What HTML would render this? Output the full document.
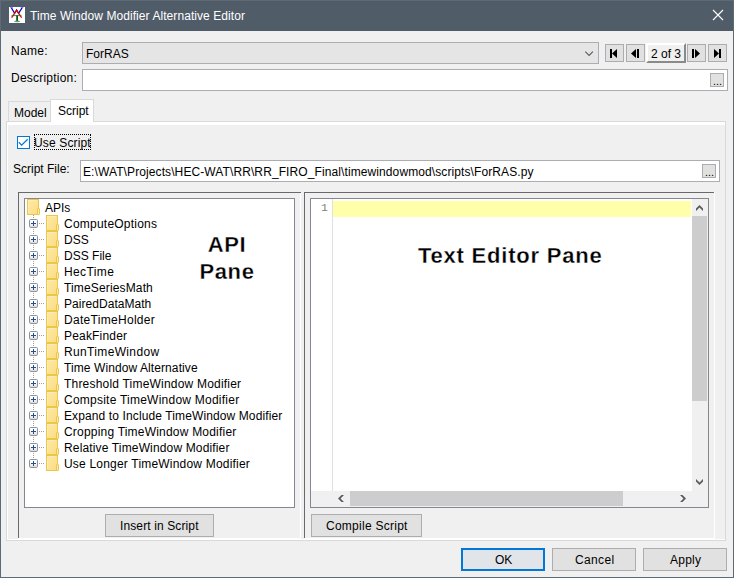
<!DOCTYPE html>
<html><head><meta charset="utf-8">
<style>
html,body{margin:0;padding:0;}
body{width:734px;height:578px;overflow:hidden;position:relative;background:#f0f0f0;font-family:"Liberation Sans",sans-serif;font-size:12px;color:#000;}
.a{position:absolute;box-sizing:border-box;}
.t{position:absolute;white-space:pre;line-height:14px;font-size:12px;}
.btn{position:absolute;box-sizing:border-box;background:#e1e1e1;border:1px solid #adadad;}
.nb{position:absolute;box-sizing:border-box;background:#e1e1e1;border:1px solid #adadad;width:19px;height:18px;top:44px;}
.fold{position:absolute;width:13px;height:16px;}
.exp{position:absolute;width:9px;height:9px;}
</style></head><body>
<!-- title bar -->
<div class="a" style="left:0;top:0;width:734px;height:31px;background:#515c69;"></div>
<div class="a" style="left:0;top:0;width:734px;height:1px;background:#5f6a77;"></div>
<div class="a" style="left:0;top:0;width:1px;height:578px;background:#5f6a77;"></div>
<div class="a" style="left:733px;top:0;width:1px;height:578px;background:#5f6a77;"></div>
<div class="a" style="left:0;top:577px;width:734px;height:1px;background:#5f6a77;"></div>
<svg class="a" style="left:9px;top:7px" width="16" height="16" viewBox="0 0 16 16">
<rect width="16" height="16" fill="#fff"/>
<path d="M2.3 0.6 L5.6 6.3 L7.6 2.8 L9.6 6.3 L13.2 0.6" fill="none" stroke="#0000c0" stroke-width="1.15"/>
<path d="M1.2 0.5 H3.8 M11.8 0.5 H14.4" stroke="#6f6fff" stroke-width="0.9"/>
<path d="M2.6 10.6 L7.6 3.4 L12.6 10.6" fill="none" stroke="#e00000" stroke-width="1.25"/>
<path d="M2.5 8.6 H12.5" stroke="#2e7d2e" stroke-width="0.9"/>
<path d="M8.1 8.6 V14" stroke="#064806" stroke-width="1.7"/>
<ellipse cx="8.1" cy="14.4" rx="3" ry="0.8" fill="#4f8f4f" opacity="0.85"/>
</svg>
<div class="t" style="left:30px;top:9px;color:#fff;letter-spacing:0.07px;">Time Window Modifier Alternative Editor</div>
<svg class="a" style="left:712px;top:9px" width="12" height="12" viewBox="0 0 12 12">
<path d="M1 1 L11 11 M11 1 L1 11" stroke="#fff" stroke-width="1.1"/>
</svg>

<!-- name row -->
<div class="t" style="left:11px;top:44px;letter-spacing:0.3px;">Name:</div>
<div class="a" style="left:82px;top:42px;width:517px;height:22px;background:#e5e5e5;border:1px solid #abadb3;"></div>
<div class="t" style="left:86px;top:47px;">ForRAS</div>
<svg class="a" style="left:584px;top:50px" width="11" height="8" viewBox="0 0 11 8">
<path d="M1.3 1.6 L5.1 5.4 L8.9 1.6" fill="none" stroke="#5a5a5a" stroke-width="1.1"/>
</svg>
<div class="nb" style="left:605px;"></div>
<div class="nb" style="left:626px;"></div>
<div class="nb" style="left:687px;"></div>
<div class="nb" style="left:708px;"></div>
<svg class="a" style="left:605px;top:44px" width="122" height="18" viewBox="0 0 122 18">
<rect x="5" y="5" width="2" height="9" fill="#000"/><path d="M7 9.5 L12 5 V14 Z" fill="#000"/>
<path d="M26 9.5 L31 5 V14 Z" fill="#000"/><rect x="32" y="5" width="2" height="9" fill="#000"/>
<rect x="87" y="5" width="2" height="9" fill="#000"/><path d="M90 5 L95 9.5 L90 14 Z" fill="#000"/>
<path d="M109 5 L114 9.5 L109 14 Z" fill="#000"/><rect x="114" y="5" width="2" height="9" fill="#000"/>
</svg>
<div class="a" style="left:646px;top:43px;width:40px;height:20px;background:#f0f0f0;border-top:2px solid #fff;border-left:2px solid #fff;border-right:2px solid #8a8a8a;border-bottom:2px solid #8a8a8a;"></div>
<div class="t" style="left:651px;top:47px;">2 of 3</div>

<!-- description -->
<div class="t" style="left:11px;top:71px;letter-spacing:0.22px;">Description:</div>
<div class="a" style="left:82px;top:69px;width:646px;height:22px;background:#fff;border:1px solid #abadb3;"></div>
<div class="a" style="left:710px;top:73px;width:14px;height:14px;background:#e1e1e1;border:1px solid #adadad;"></div>
<div class="t" style="left:713px;top:74px;font-size:11px;">...</div>

<!-- tabs -->
<div class="a" style="left:8px;top:101px;width:43px;height:21px;background:#f0f0f0;border:1px solid #d9d9d9;border-bottom:none;"></div>
<div class="t" style="left:14px;top:106px;">Model</div>
<div class="a" style="left:6px;top:121px;width:720px;height:420px;border:1px solid #d9d9d9;background:#f0f0f0;"></div>
<div class="a" style="left:7px;top:122px;width:718px;height:3px;background:#fff;"></div>
<div class="a" style="left:7px;top:122px;width:1px;height:418px;background:#fff;"></div>
<div class="a" style="left:7px;top:539px;width:718px;height:1px;background:#fff;"></div>
<div class="a" style="left:50px;top:99px;width:44px;height:23px;background:#fff;border:1px solid #d9d9d9;border-bottom:none;"></div>
<div class="t" style="left:58px;top:104px;">Script</div>

<!-- use script -->
<div class="a" style="left:17px;top:136px;width:13px;height:13px;background:#fff;border:1px solid #0078d7;"></div>
<svg class="a" style="left:17px;top:136px" width="13" height="13" viewBox="0 0 13 13">
<path d="M1.8 6.3 L4.6 9.1 L10.7 3.2" fill="none" stroke="#0078d7" stroke-width="1.25"/>
</svg>
<div class="a" style="left:34px;top:134px;width:57px;height:16px;border:1px dotted #000;"></div>
<div class="t" style="left:34px;top:136px;letter-spacing:0.15px;">Use Script</div>

<!-- script file -->
<div class="t" style="left:13px;top:162px;">Script File:</div>
<div class="a" style="left:80px;top:160px;width:640px;height:22px;background:#fff;border:1px solid #abadb3;"></div>
<div class="t" style="left:83px;top:165px;letter-spacing:0.1px;">E:\WAT\Projects\HEC-WAT\RR\RR_FIRO_Final\timewindowmod\scripts\ForRAS.py</div>
<div class="a" style="left:702px;top:164px;width:14px;height:14px;background:#e1e1e1;border:1px solid #adadad;"></div>
<div class="t" style="left:705px;top:165px;font-size:11px;">...</div>

<!-- left pane -->
<div class="a" style="left:18px;top:538px;width:283px;height:1px;background:#fff;"></div><div class="a" style="left:300px;top:193px;width:1px;height:346px;background:#fff;"></div><div class="a" style="left:18px;top:192px;width:283px;height:1px;background:#696969;"></div><div class="a" style="left:18px;top:192px;width:1px;height:346px;background:#696969;"></div>
<div class="a" style="left:24px;top:198px;width:271px;height:310px;background:#fff;border:1px solid #828790;"></div>
<!--TREE--><svg class="a" style="left:25px;top:199px" width="269" height="308" viewBox="25 199 269 308"><defs><linearGradient id="fg" x1="0" y1="0" x2="1" y2="1"><stop offset="0" stop-color="#fee9a8"/><stop offset="1" stop-color="#fbdc80"/></linearGradient><linearGradient id="eg" x1="0" y1="0" x2="0" y2="1"><stop offset="0" stop-color="#ffffff"/><stop offset="0.5" stop-color="#f8f8f8"/><stop offset="1" stop-color="#d8d8d8"/></linearGradient></defs><g transform="translate(27,199)"><rect x="0.5" y="0.5" width="11" height="15" fill="url(#fg)" stroke="#ebc54c"/><path d="M1.5 14 V1.5 H10" fill="none" stroke="#fff0c0" stroke-opacity="0.55"/><rect x="10.5" y="9.5" width="2" height="6" rx="0.6" fill="#fdeaa8" stroke="#ebc54c"/></g><path d="M33 215h1v1h-1zM33 217h1v1h-1zM33 229h1v1h-1zM33 231h1v1h-1zM33 233h1v1h-1zM33 245h1v1h-1zM33 247h1v1h-1zM33 249h1v1h-1zM33 261h1v1h-1zM33 263h1v1h-1zM33 265h1v1h-1zM33 277h1v1h-1zM33 279h1v1h-1zM33 281h1v1h-1zM33 293h1v1h-1zM33 295h1v1h-1zM33 297h1v1h-1zM33 309h1v1h-1zM33 311h1v1h-1zM33 313h1v1h-1zM33 325h1v1h-1zM33 327h1v1h-1zM33 329h1v1h-1zM33 341h1v1h-1zM33 343h1v1h-1zM33 345h1v1h-1zM33 357h1v1h-1zM33 359h1v1h-1zM33 361h1v1h-1zM33 373h1v1h-1zM33 375h1v1h-1zM33 377h1v1h-1zM33 389h1v1h-1zM33 391h1v1h-1zM33 393h1v1h-1zM33 405h1v1h-1zM33 407h1v1h-1zM33 409h1v1h-1zM33 421h1v1h-1zM33 423h1v1h-1zM33 425h1v1h-1zM33 437h1v1h-1zM33 439h1v1h-1zM33 441h1v1h-1zM33 453h1v1h-1zM33 455h1v1h-1zM33 457h1v1h-1z" fill="#a0a0a0"/><rect x="29.5" y="219.5" width="8" height="8" rx="1.2" fill="url(#eg)" stroke="#919191"/><path d="M31 223h5v1h-5z M33 221h1v5h-1z" fill="#2b4c94"/><path d="M39 223h1v1h-1z M41 223h1v1h-1z M43 223h1v1h-1z" fill="#a0a0a0"/><g transform="translate(46,215)"><rect x="0.5" y="0.5" width="11" height="15" fill="url(#fg)" stroke="#ebc54c"/><path d="M1.5 14 V1.5 H10" fill="none" stroke="#fff0c0" stroke-opacity="0.55"/><rect x="10.5" y="9.5" width="2" height="6" rx="0.6" fill="#fdeaa8" stroke="#ebc54c"/></g><rect x="29.5" y="235.5" width="8" height="8" rx="1.2" fill="url(#eg)" stroke="#919191"/><path d="M31 239h5v1h-5z M33 237h1v5h-1z" fill="#2b4c94"/><path d="M39 239h1v1h-1z M41 239h1v1h-1z M43 239h1v1h-1z" fill="#a0a0a0"/><g transform="translate(46,231)"><rect x="0.5" y="0.5" width="11" height="15" fill="url(#fg)" stroke="#ebc54c"/><path d="M1.5 14 V1.5 H10" fill="none" stroke="#fff0c0" stroke-opacity="0.55"/><rect x="10.5" y="9.5" width="2" height="6" rx="0.6" fill="#fdeaa8" stroke="#ebc54c"/></g><rect x="29.5" y="251.5" width="8" height="8" rx="1.2" fill="url(#eg)" stroke="#919191"/><path d="M31 255h5v1h-5z M33 253h1v5h-1z" fill="#2b4c94"/><path d="M39 255h1v1h-1z M41 255h1v1h-1z M43 255h1v1h-1z" fill="#a0a0a0"/><g transform="translate(46,247)"><rect x="0.5" y="0.5" width="11" height="15" fill="url(#fg)" stroke="#ebc54c"/><path d="M1.5 14 V1.5 H10" fill="none" stroke="#fff0c0" stroke-opacity="0.55"/><rect x="10.5" y="9.5" width="2" height="6" rx="0.6" fill="#fdeaa8" stroke="#ebc54c"/></g><rect x="29.5" y="267.5" width="8" height="8" rx="1.2" fill="url(#eg)" stroke="#919191"/><path d="M31 271h5v1h-5z M33 269h1v5h-1z" fill="#2b4c94"/><path d="M39 271h1v1h-1z M41 271h1v1h-1z M43 271h1v1h-1z" fill="#a0a0a0"/><g transform="translate(46,263)"><rect x="0.5" y="0.5" width="11" height="15" fill="url(#fg)" stroke="#ebc54c"/><path d="M1.5 14 V1.5 H10" fill="none" stroke="#fff0c0" stroke-opacity="0.55"/><rect x="10.5" y="9.5" width="2" height="6" rx="0.6" fill="#fdeaa8" stroke="#ebc54c"/></g><rect x="29.5" y="283.5" width="8" height="8" rx="1.2" fill="url(#eg)" stroke="#919191"/><path d="M31 287h5v1h-5z M33 285h1v5h-1z" fill="#2b4c94"/><path d="M39 287h1v1h-1z M41 287h1v1h-1z M43 287h1v1h-1z" fill="#a0a0a0"/><g transform="translate(46,279)"><rect x="0.5" y="0.5" width="11" height="15" fill="url(#fg)" stroke="#ebc54c"/><path d="M1.5 14 V1.5 H10" fill="none" stroke="#fff0c0" stroke-opacity="0.55"/><rect x="10.5" y="9.5" width="2" height="6" rx="0.6" fill="#fdeaa8" stroke="#ebc54c"/></g><rect x="29.5" y="299.5" width="8" height="8" rx="1.2" fill="url(#eg)" stroke="#919191"/><path d="M31 303h5v1h-5z M33 301h1v5h-1z" fill="#2b4c94"/><path d="M39 303h1v1h-1z M41 303h1v1h-1z M43 303h1v1h-1z" fill="#a0a0a0"/><g transform="translate(46,295)"><rect x="0.5" y="0.5" width="11" height="15" fill="url(#fg)" stroke="#ebc54c"/><path d="M1.5 14 V1.5 H10" fill="none" stroke="#fff0c0" stroke-opacity="0.55"/><rect x="10.5" y="9.5" width="2" height="6" rx="0.6" fill="#fdeaa8" stroke="#ebc54c"/></g><rect x="29.5" y="315.5" width="8" height="8" rx="1.2" fill="url(#eg)" stroke="#919191"/><path d="M31 319h5v1h-5z M33 317h1v5h-1z" fill="#2b4c94"/><path d="M39 319h1v1h-1z M41 319h1v1h-1z M43 319h1v1h-1z" fill="#a0a0a0"/><g transform="translate(46,311)"><rect x="0.5" y="0.5" width="11" height="15" fill="url(#fg)" stroke="#ebc54c"/><path d="M1.5 14 V1.5 H10" fill="none" stroke="#fff0c0" stroke-opacity="0.55"/><rect x="10.5" y="9.5" width="2" height="6" rx="0.6" fill="#fdeaa8" stroke="#ebc54c"/></g><rect x="29.5" y="331.5" width="8" height="8" rx="1.2" fill="url(#eg)" stroke="#919191"/><path d="M31 335h5v1h-5z M33 333h1v5h-1z" fill="#2b4c94"/><path d="M39 335h1v1h-1z M41 335h1v1h-1z M43 335h1v1h-1z" fill="#a0a0a0"/><g transform="translate(46,327)"><rect x="0.5" y="0.5" width="11" height="15" fill="url(#fg)" stroke="#ebc54c"/><path d="M1.5 14 V1.5 H10" fill="none" stroke="#fff0c0" stroke-opacity="0.55"/><rect x="10.5" y="9.5" width="2" height="6" rx="0.6" fill="#fdeaa8" stroke="#ebc54c"/></g><rect x="29.5" y="347.5" width="8" height="8" rx="1.2" fill="url(#eg)" stroke="#919191"/><path d="M31 351h5v1h-5z M33 349h1v5h-1z" fill="#2b4c94"/><path d="M39 351h1v1h-1z M41 351h1v1h-1z M43 351h1v1h-1z" fill="#a0a0a0"/><g transform="translate(46,343)"><rect x="0.5" y="0.5" width="11" height="15" fill="url(#fg)" stroke="#ebc54c"/><path d="M1.5 14 V1.5 H10" fill="none" stroke="#fff0c0" stroke-opacity="0.55"/><rect x="10.5" y="9.5" width="2" height="6" rx="0.6" fill="#fdeaa8" stroke="#ebc54c"/></g><rect x="29.5" y="363.5" width="8" height="8" rx="1.2" fill="url(#eg)" stroke="#919191"/><path d="M31 367h5v1h-5z M33 365h1v5h-1z" fill="#2b4c94"/><path d="M39 367h1v1h-1z M41 367h1v1h-1z M43 367h1v1h-1z" fill="#a0a0a0"/><g transform="translate(46,359)"><rect x="0.5" y="0.5" width="11" height="15" fill="url(#fg)" stroke="#ebc54c"/><path d="M1.5 14 V1.5 H10" fill="none" stroke="#fff0c0" stroke-opacity="0.55"/><rect x="10.5" y="9.5" width="2" height="6" rx="0.6" fill="#fdeaa8" stroke="#ebc54c"/></g><rect x="29.5" y="379.5" width="8" height="8" rx="1.2" fill="url(#eg)" stroke="#919191"/><path d="M31 383h5v1h-5z M33 381h1v5h-1z" fill="#2b4c94"/><path d="M39 383h1v1h-1z M41 383h1v1h-1z M43 383h1v1h-1z" fill="#a0a0a0"/><g transform="translate(46,375)"><rect x="0.5" y="0.5" width="11" height="15" fill="url(#fg)" stroke="#ebc54c"/><path d="M1.5 14 V1.5 H10" fill="none" stroke="#fff0c0" stroke-opacity="0.55"/><rect x="10.5" y="9.5" width="2" height="6" rx="0.6" fill="#fdeaa8" stroke="#ebc54c"/></g><rect x="29.5" y="395.5" width="8" height="8" rx="1.2" fill="url(#eg)" stroke="#919191"/><path d="M31 399h5v1h-5z M33 397h1v5h-1z" fill="#2b4c94"/><path d="M39 399h1v1h-1z M41 399h1v1h-1z M43 399h1v1h-1z" fill="#a0a0a0"/><g transform="translate(46,391)"><rect x="0.5" y="0.5" width="11" height="15" fill="url(#fg)" stroke="#ebc54c"/><path d="M1.5 14 V1.5 H10" fill="none" stroke="#fff0c0" stroke-opacity="0.55"/><rect x="10.5" y="9.5" width="2" height="6" rx="0.6" fill="#fdeaa8" stroke="#ebc54c"/></g><rect x="29.5" y="411.5" width="8" height="8" rx="1.2" fill="url(#eg)" stroke="#919191"/><path d="M31 415h5v1h-5z M33 413h1v5h-1z" fill="#2b4c94"/><path d="M39 415h1v1h-1z M41 415h1v1h-1z M43 415h1v1h-1z" fill="#a0a0a0"/><g transform="translate(46,407)"><rect x="0.5" y="0.5" width="11" height="15" fill="url(#fg)" stroke="#ebc54c"/><path d="M1.5 14 V1.5 H10" fill="none" stroke="#fff0c0" stroke-opacity="0.55"/><rect x="10.5" y="9.5" width="2" height="6" rx="0.6" fill="#fdeaa8" stroke="#ebc54c"/></g><rect x="29.5" y="427.5" width="8" height="8" rx="1.2" fill="url(#eg)" stroke="#919191"/><path d="M31 431h5v1h-5z M33 429h1v5h-1z" fill="#2b4c94"/><path d="M39 431h1v1h-1z M41 431h1v1h-1z M43 431h1v1h-1z" fill="#a0a0a0"/><g transform="translate(46,423)"><rect x="0.5" y="0.5" width="11" height="15" fill="url(#fg)" stroke="#ebc54c"/><path d="M1.5 14 V1.5 H10" fill="none" stroke="#fff0c0" stroke-opacity="0.55"/><rect x="10.5" y="9.5" width="2" height="6" rx="0.6" fill="#fdeaa8" stroke="#ebc54c"/></g><rect x="29.5" y="443.5" width="8" height="8" rx="1.2" fill="url(#eg)" stroke="#919191"/><path d="M31 447h5v1h-5z M33 445h1v5h-1z" fill="#2b4c94"/><path d="M39 447h1v1h-1z M41 447h1v1h-1z M43 447h1v1h-1z" fill="#a0a0a0"/><g transform="translate(46,439)"><rect x="0.5" y="0.5" width="11" height="15" fill="url(#fg)" stroke="#ebc54c"/><path d="M1.5 14 V1.5 H10" fill="none" stroke="#fff0c0" stroke-opacity="0.55"/><rect x="10.5" y="9.5" width="2" height="6" rx="0.6" fill="#fdeaa8" stroke="#ebc54c"/></g><rect x="29.5" y="459.5" width="8" height="8" rx="1.2" fill="url(#eg)" stroke="#919191"/><path d="M31 463h5v1h-5z M33 461h1v5h-1z" fill="#2b4c94"/><path d="M39 463h1v1h-1z M41 463h1v1h-1z M43 463h1v1h-1z" fill="#a0a0a0"/><g transform="translate(46,455)"><rect x="0.5" y="0.5" width="11" height="15" fill="url(#fg)" stroke="#ebc54c"/><path d="M1.5 14 V1.5 H10" fill="none" stroke="#fff0c0" stroke-opacity="0.55"/><rect x="10.5" y="9.5" width="2" height="6" rx="0.6" fill="#fdeaa8" stroke="#ebc54c"/></g></svg>
<div class="t" style="left:45px;top:201px;">APIs</div>
<div class="t" style="left:64px;top:217px;letter-spacing:0.228px;">ComputeOptions</div>
<div class="t" style="left:64px;top:233px;letter-spacing:0.090px;">DSS</div>
<div class="t" style="left:64px;top:249px;letter-spacing:0.019px;">DSS File</div>
<div class="t" style="left:64px;top:265px;letter-spacing:0.390px;">HecTime</div>
<div class="t" style="left:64px;top:281px;letter-spacing:0.144px;">TimeSeriesMath</div>
<div class="t" style="left:64px;top:297px;letter-spacing:0.044px;">PairedDataMath</div>
<div class="t" style="left:64px;top:313px;letter-spacing:0.298px;">DateTimeHolder</div>
<div class="t" style="left:64px;top:329px;letter-spacing:0.179px;">PeakFinder</div>
<div class="t" style="left:64px;top:345px;letter-spacing:0.348px;">RunTimeWindow</div>
<div class="t" style="left:64px;top:361px;letter-spacing:0.090px;">Time Window Alternative</div>
<div class="t" style="left:64px;top:377px;letter-spacing:0.201px;">Threshold TimeWindow Modifier</div>
<div class="t" style="left:64px;top:393px;letter-spacing:0.238px;">Compsite TimeWindow Modifier</div>
<div class="t" style="left:64px;top:409px;letter-spacing:0.115px;">Expand to Include TimeWindow Modifier</div>
<div class="t" style="left:64px;top:425px;letter-spacing:0.205px;">Cropping TimeWindow Modifier</div>
<div class="t" style="left:64px;top:441px;letter-spacing:0.149px;">Relative TimeWindow Modifier</div>
<div class="t" style="left:64px;top:457px;letter-spacing:0.197px;">Use Longer TimeWindow Modifier</div><!--/TREE-->
<div class="a" style="left:197px;top:231px;font-weight:bold;font-size:22px;line-height:27px;letter-spacing:0.6px;-webkit-text-stroke:0.3px #fff;text-align:center;width:60px;">API<br>Pane</div>
<div class="btn" style="left:105px;top:514px;width:109px;height:23px;"></div>
<div class="t" style="left:120px;top:519px;letter-spacing:0.12px;">Insert in Script</div>

<!-- right pane -->
<div class="a" style="left:304px;top:538px;width:411px;height:1px;background:#fff;"></div><div class="a" style="left:714px;top:192px;width:1px;height:347px;background:#fff;"></div><div class="a" style="left:304px;top:192px;width:410px;height:1px;background:#696969;"></div><div class="a" style="left:304px;top:192px;width:1px;height:346px;background:#696969;"></div>
<div class="a" style="left:310px;top:198px;width:399px;height:310px;background:#fff;border:1px solid #828790;"></div>
<div class="a" style="left:332px;top:199px;width:1px;height:292px;background:#e0e0e0;"></div>
<div class="a" style="left:333px;top:201px;width:358px;height:16px;background:#ffffaa;"></div>
<div class="t" style="left:321px;top:201px;font-family:'Liberation Mono',monospace;font-size:11.5px;color:#808080;">1</div>
<div class="a" style="left:418px;top:242px;font-weight:bold;font-size:22px;line-height:27px;letter-spacing:0.78px;-webkit-text-stroke:0.3px #fff;white-space:pre;">Text Editor Pane</div>
<!-- vscroll -->
<div class="a" style="left:692px;top:199px;width:16px;height:292px;background:#f0f0f0;"></div>
<div class="a" style="left:692px;top:216px;width:15px;height:185px;background:#cdcdcd;"></div>
<!-- hscroll -->
<div class="a" style="left:311px;top:491px;width:381px;height:16px;background:#f0f0f0;"></div>
<div class="a" style="left:692px;top:491px;width:16px;height:16px;background:#f0f0f0;"></div>
<div class="a" style="left:350px;top:491px;width:273px;height:15px;background:#cdcdcd;"></div>
<svg class="a" style="left:0;top:0" width="734" height="578" viewBox="0 0 734 578"><g fill="#5a5a5a">
<path d="M696 208.5 L699.5 205 L703 208.5 L703 211 L699.5 207.5 L696 211 Z"/>
<path d="M696 479 L699.5 482.5 L703 479 L703 481.5 L699.5 485 L696 481.5 Z"/>
<path d="M680 495 L683.5 498.5 L680 502 L682.5 502 L686 498.5 L682.5 495 Z"/>
<path d="M344 495 L340.5 498.5 L344 502 L341.5 502 L338 498.5 L341.5 495 Z"/>
</g></svg>
<div class="btn" style="left:311px;top:514px;width:111px;height:23px;"></div>
<div class="t" style="left:326px;top:519px;letter-spacing:0.26px;">Compile Script</div>

<!-- bottom buttons -->
<div class="a" style="left:461px;top:548px;width:84px;height:23px;background:#e1e5ea;border:2px solid #0078d7;"></div>
<div class="t" style="left:495px;top:553px;">OK</div>
<div class="btn" style="left:552px;top:548px;width:84px;height:23px;"></div>
<div class="t" style="left:575px;top:553px;letter-spacing:0.35px;">Cancel</div>
<div class="btn" style="left:643px;top:548px;width:84px;height:23px;"></div>
<div class="t" style="left:670px;top:553px;letter-spacing:0.25px;">Apply</div>
</body></html>
